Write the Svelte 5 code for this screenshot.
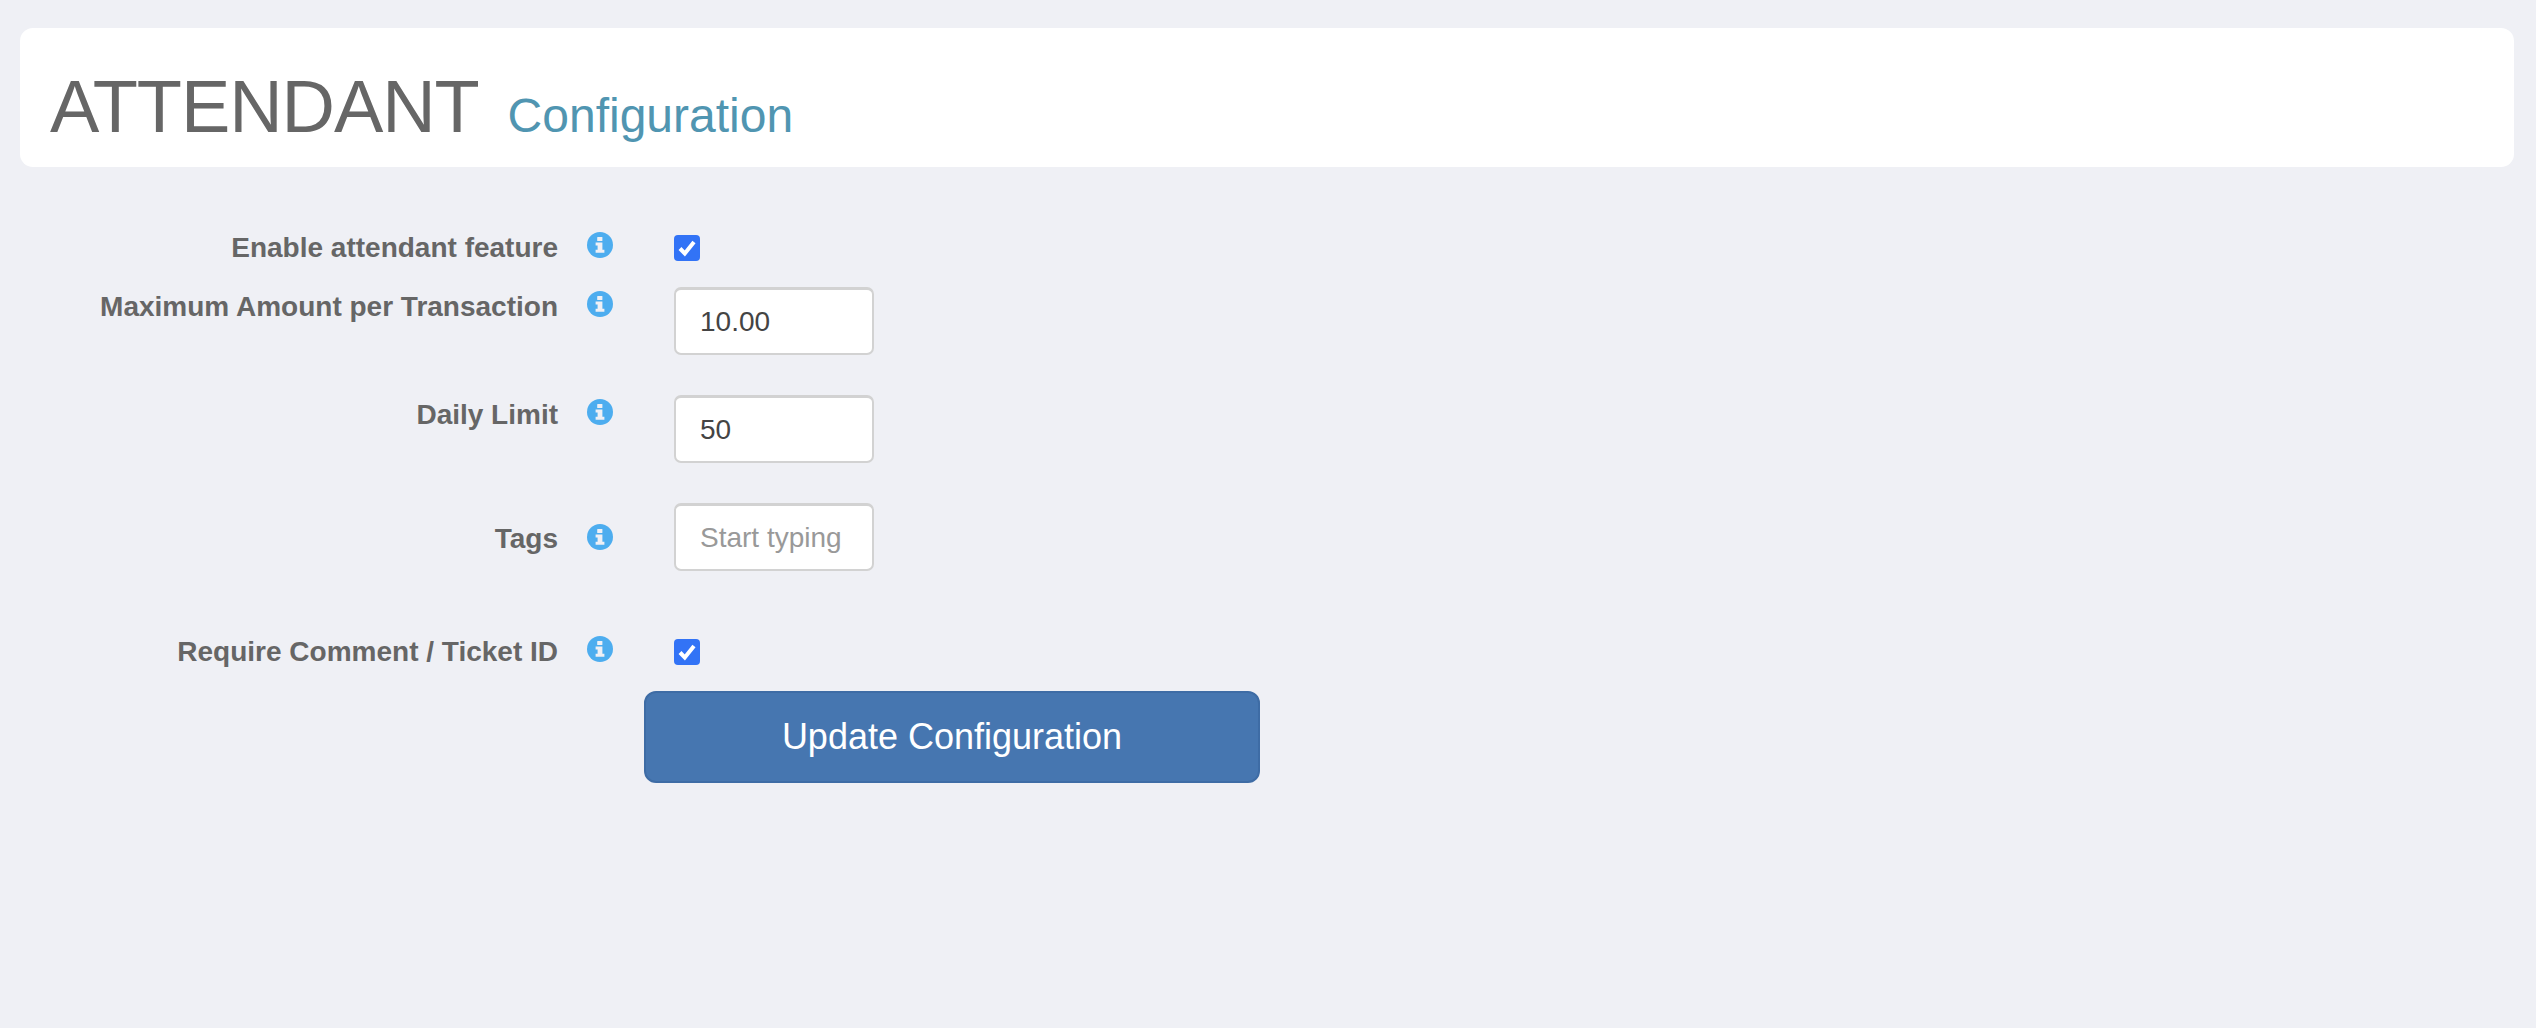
<script>
  const rows = [
    { label: 'Enable attendant feature', type: 'check', cls: 'after-check' },
    { label: 'Maximum Amount per Transaction', type: 'text', value: '10.00', cls: 'after-input' },
    { label: 'Daily Limit', type: 'text', value: '50', cls: 'after-input' },
    { label: 'Tags', type: 'text', placeholder: 'Start typing', cls: 'after-tags' },
    { label: 'Require Comment / Ticket ID', type: 'check', cls: 'after-check' }
  ];
</script>

<div class="page">
  <header class="card">
    <h1>ATTENDANT</h1>
    <span class="sub">Configuration</span>
  </header>

  <form class="form">
    {#each rows as row}
      <div class="row {row.cls}" class:has-input={row.type === 'text'}>
        <label class="label" for={row.label}>{row.label}</label>
        <span class="info">
          <svg viewBox="0 0 26 26" width="26" height="26" aria-hidden="true">
            <circle cx="13" cy="13" r="13" fill="#4dadef" />
            <rect x="10.2" y="5" width="5.2" height="4" rx="0.6" fill="#eff0f5" />
            <path d="M8.6 10.6h6.8v7.2h2v3H8.6v-3h2v-4.2h-2z" fill="#eff0f5" />
          </svg>
        </span>
        <div class="control">
          {#if row.type === 'check'}
            <span class="check">
              <input id={row.label} type="checkbox" checked />
              <svg viewBox="0 0 26 26" width="26" height="26" aria-hidden="true">
                <path d="M6 13.5l4.8 5L20 7" fill="none" stroke="#fff" stroke-width="4" />
              </svg>
            </span>
          {:else}
            <input id={row.label} class="text" type="text" value={row.value ?? ''} placeholder={row.placeholder ?? ''} />
          {/if}
        </div>
      </div>
    {/each}
    <button type="button" class="submit">Update Configuration</button>
  </form>
</div>

<style>
  :global(body) {
    margin: 0;
    background: #eff0f5;
  }
  .page {
    min-height: 1028px;
    box-sizing: border-box;
    padding: 28px 22px 0 20px;
    font-family: "Liberation Sans", Arial, sans-serif;
    color: #666;
  }
  .card {
    height: 139px;
    box-sizing: border-box;
    background: #fff;
    border-radius: 13px;
    padding: 37px 0 0 30px;
    display: flex;
    align-items: baseline;
    gap: 29px;
  }
  h1 {
    margin: 0;
    font-size: 74px;
    font-weight: 400;
    line-height: 84px;
    letter-spacing: -1.1px;
    color: #666;
  }
  .sub {
    font-size: 48px;
    color: #5095b1;
  }
  .form {
    padding-top: 66px;
    display: flex;
    flex-direction: column;
    align-items: flex-start;
  }
  .row {
    display: flex;
    align-items: flex-start;
  }
  .after-check { margin-bottom: 24px; }
  .after-input { margin-bottom: 40px; }
  .after-tags { margin-bottom: 66px; }
  .label {
    width: 538px;
    text-align: right;
    font-size: 28px;
    font-weight: 700;
    line-height: 30px;
    color: #666;
  }
  .info {
    display: block;
    width: 26px;
    height: 26px;
    margin-left: 29px;
    margin-top: -1px;
  }
  .info svg, .check svg { display: block; }
  .control { margin-left: 61px; }
  .check {
    display: block;
    position: relative;
    width: 26px;
    height: 26px;
    background: #3273f6;
    border-radius: 4px;
    margin-top: 2px;
  }
  .check input {
    position: absolute;
    inset: 0;
    margin: 0;
    opacity: 0;
  }
  .has-input .label { margin-top: 5px; }
  .has-input .info { margin-top: 4px; }
  .after-tags .label { margin-top: 21px; }
  .after-tags .info { margin-top: 21px; }
  .text {
    display: block;
    width: 200px;
    height: 68px;
    box-sizing: border-box;
    border: 2px solid #d2d2d2;
    border-top-width: 3px;
    border-radius: 7px;
    background: #fff;
    padding: 0 24px;
    font-family: inherit;
    font-size: 28px;
    color: #444;
    outline: none;
  }
  .text::placeholder { color: #999; opacity: 1; }
  .submit {
    margin-left: 624px;
    width: 616px;
    height: 92px;
    box-sizing: border-box;
    background: #4676b0;
    border: 2px solid #3e6ca5;
    border-radius: 12px;
    color: #fff;
    font-family: inherit;
    font-size: 36px;
    padding: 0;
  }
</style>
